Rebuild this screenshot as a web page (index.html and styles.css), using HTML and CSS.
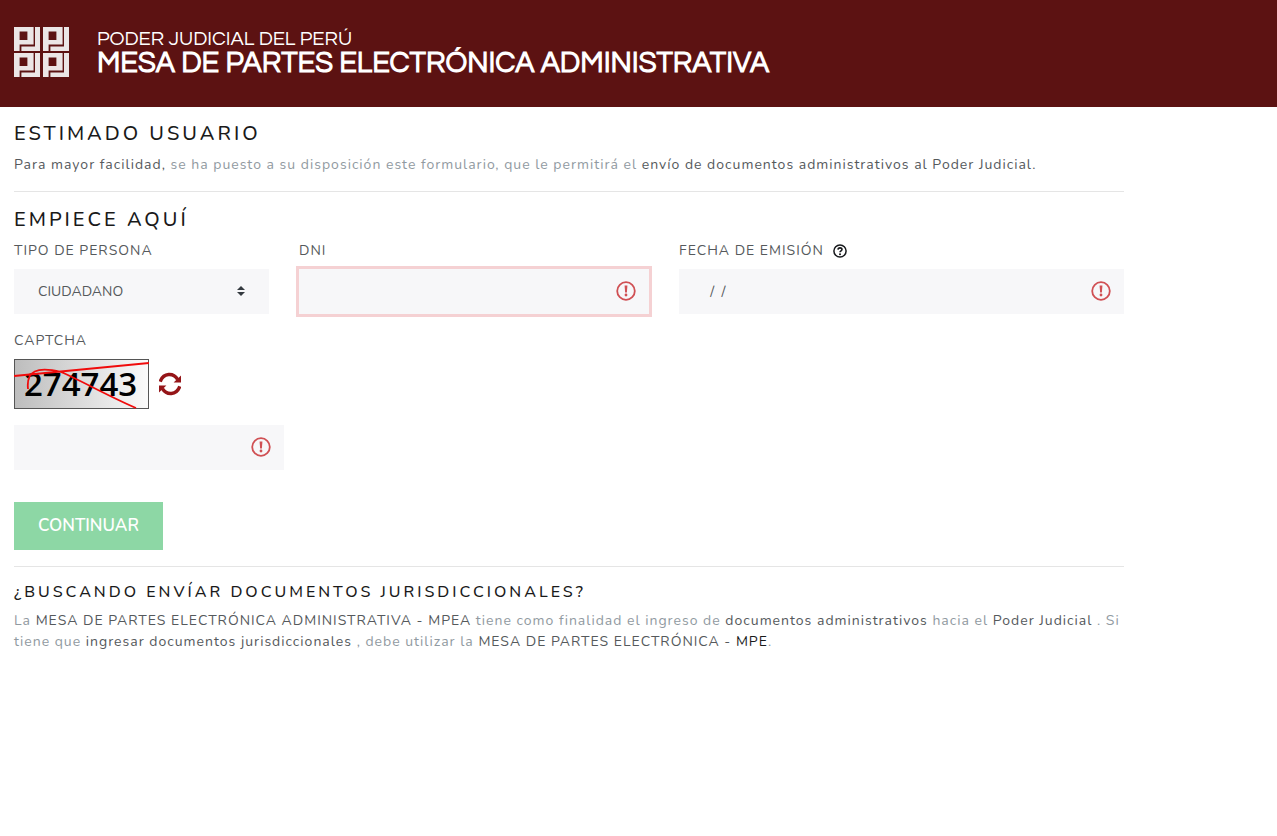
FILE: index.html
```html
<!DOCTYPE html>
<html lang="es">
<head>
  <meta charset="utf-8">
  <meta name="viewport" content="width=device-width, initial-scale=1">
  <title>Mesa de Partes Electrónica Administrativa</title>
  <link rel="stylesheet" href="styles.css">
</head>
<body>
<!-- Iconos -->
<svg class="sprite" aria-hidden="true">
  <symbol id="icon-alert" viewBox="0 0 20 20">
    <circle cx="10" cy="10" r="8.8" fill="none" stroke="#d05054" stroke-width="1.8"/>
    <path d="M8.6 4.5h2.8l-.5 7H9.1z" fill="#d05054"/>
    <circle cx="10" cy="14" r="1.4" fill="#d05054"/>
  </symbol>
  <symbol id="logo-pj" viewBox="0 0 26 24">
    <path fill-rule="evenodd" d="M0 0H19.6V17.6H5.6V24H0ZM5.6 4.4V13H13.4V4.4Z"/>
    <path d="M21 0H26V24H7.4V19.4H21Z"/>
  </symbol>
</svg>

<!-- Cabecera -->
<header class="header">
  <svg class="logo" viewBox="0 0 55 50" aria-hidden="true">
    <use href="#logo-pj" x="0" y="0" width="26" height="24"/>
    <use href="#logo-pj" x="29" y="0" width="26" height="24"/>
    <use href="#logo-pj" x="0" y="26" width="26" height="24"/>
    <use href="#logo-pj" x="29" y="26" width="26" height="24"/>
  </svg>
  <div class="brand">
    <span class="brand-top">PODER JUDICIAL DEL PERÚ</span>
    <span class="brand-name">MESA DE PARTES ELECTRÓNICA ADMINISTRATIVA</span>
  </div>
</header>

<main class="container">
  <section class="intro">
    <h1>ESTIMADO USUARIO</h1>
    <p><b>Para mayor facilidad,</b> se ha puesto a su disposición este formulario, que le permitirá el <b>envío de documentos administrativos al Poder Judicial.</b></p>
  </section>
  <hr>

  <!-- Formulario -->
  <form>
    <h1>EMPIECE AQUÍ</h1>
    <div class="row">
      <div class="field col-3">
        <label for="tipo">TIPO DE PERSONA</label>
        <div class="control">
          <select id="tipo" name="tipo">
            <option>CIUDADANO</option>
          </select>
          <svg class="arrows" viewBox="0 0 8 10" aria-hidden="true"><path d="M4 0l4 4H0zM4 10L0 6h8z"/></svg>
        </div>
      </div>
      <div class="field col-4">
        <label for="dni">DNI</label>
        <div class="control">
          <input class="focused" type="text" id="dni" name="dni">
          <svg class="alert"><use href="#icon-alert"/></svg>
        </div>
      </div>
      <div class="field col-5">
        <label for="fecha">FECHA DE EMISIÓN
          <svg class="help" viewBox="0 0 14 14" aria-hidden="true">
            <circle cx="7" cy="7" r="6.1" fill="none" stroke="#16181b" stroke-width="1.5"/>
            <path d="M5 5.6C5.1 3.3 9 3.3 9 5.5 9 6.9 7 6.8 7 8.3" fill="none" stroke="#16181b" stroke-width="1.6"/>
            <circle cx="7" cy="10.3" r="1" fill="#16181b"/>
          </svg>
        </label>
        <div class="control">
          <input type="text" id="fecha" name="fecha" value="  /  /">
          <svg class="alert"><use href="#icon-alert"/></svg>
        </div>
      </div>
    </div>

    <div class="field captcha">
      <label for="captcha">CAPTCHA</label>
      <div class="captcha-line">
        <svg class="captcha-image" viewBox="0 0 135 50">
          <defs>
            <linearGradient id="captcha-bg" x1="0" y1="0" x2="1" y2="0">
              <stop offset="0" stop-color="#bdbdbd"/>
              <stop offset="1" stop-color="#fafafa"/>
            </linearGradient>
          </defs>
          <rect x=".5" y=".5" width="134" height="49" fill="url(#captcha-bg)" stroke="#555"/>
          <text x="10" y="37">274743</text>
          <path d="M0 17L135 4M14 30C12 12 23 7 47 13C66 21 92 36 122 49" fill="none" stroke="#f00b0b" stroke-width="1.8"/>
        </svg>
        <button type="button" class="refresh" aria-label="Actualizar">
          <svg viewBox="0 0 22 24" aria-hidden="true">
            <path d="M1.2 9.6C4.5 .4 14.5 .6 18.6 7.4M20.8 14.4C17.5 23.6 7.5 23.4 3.4 16.6" fill="none" stroke="#951518" stroke-width="3.4"/>
            <path d="M22 3.4v7.2h-7.4zM0 20.6v-7.2h7.4z" fill="#951518"/>
          </svg>
        </button>
      </div>
      <div class="control">
        <input type="text" id="captcha" name="captcha">
        <svg class="alert"><use href="#icon-alert"/></svg>
      </div>
    </div>

    <button type="submit" class="btn">CONTINUAR</button>
  </form>
  <hr>

  <section class="info">
    <h2>¿BUSCANDO ENVÍAR DOCUMENTOS JURISDICCIONALES?</h2>
    <p>La <b>MESA DE PARTES ELECTRÓNICA ADMINISTRATIVA - MPEA</b> tiene como finalidad el ingreso de <b>documentos administrativos</b> hacia el <b>Poder Judicial</b> . Si tiene que <b>ingresar documentos jurisdiccionales</b> , debe utilizar la <b>MESA DE PARTES ELECTRÓNICA - <a href="#">MPE</a></b>.</p>
  </section>
</main>
</body>
</html>
```
FILE: styles.css
```css
/* base */
* { box-sizing: border-box; }
body { margin: 0; background: #fff; color: #919aa1; font-family: Nunito, Lato, sans-serif; font-size: 14px; line-height: 21px; letter-spacing: 1px; }
h1, h2 { color: #1a1a1a; font-weight: 500; letter-spacing: 3px; margin: 0; }
h1 { font-size: 20px; line-height: 24px; }
h2 { font-size: 16px; line-height: 18px; }
p { margin: 0; }
b { color: #55595c; font-weight: 400; }
a { color: #1a1a1a; text-decoration: none; }
hr { border: 0; border-top: 1px solid #e5e5e5; margin: 16px 0; }
.sprite { display: none; }

/* cabecera */
.header { display: flex; align-items: center; gap: 28px; background: #5c1212; color: #fff; padding: 27px 14px 30px; }
.logo { width: 55px; height: 50px; fill: #ebe6e6; }
.brand { display: flex; flex-direction: column; font-family: Questrial, Inter, sans-serif; letter-spacing: normal; }
.brand-top { font-size: 20px; line-height: 22px; font-weight: 400; }
.brand-name { font-size: 29px; line-height: 26px; font-weight: 700; }

/* contenido */
.container { max-width: 1138px; padding: 15px 14px; }
.intro p { margin-top: 8px; }
.row { display: grid; grid-template-columns: repeat(12, 1fr); column-gap: 30px; margin-top: 8px; }
.col-3 { grid-column: span 3; }
.col-4 { grid-column: span 4; }
.col-5 { grid-column: span 5; }

/* campos */
.field label { display: flex; align-items: center; gap: 9px; height: 21px; margin-bottom: 8px; color: #55595c; }
.control { position: relative; }
.control input, .control select { display: block; width: 100%; height: 45px; padding: 0 24px; border: 0; border-radius: 0; background: #f7f7f9; color: #55595c; font: inherit; letter-spacing: normal; appearance: none; outline: none; }
.control input.focused { box-shadow: 0 0 0 3px #f5d1d3; }
.alert { position: absolute; right: 13px; top: 12px; width: 20px; height: 20px; }
.arrows { position: absolute; right: 24px; top: 17px; width: 8px; height: 10px; fill: #343a40; }
.help { width: 14px; height: 14px; }

/* captcha */
.captcha { width: 270px; margin-top: 16px; }
.captcha-line { display: flex; align-items: center; gap: 10px; margin-bottom: 16px; }
.captcha-image { width: 135px; height: 50px; }
.captcha-image text { font-family: "Open Sans", sans-serif; font-size: 33px; font-weight: 600; letter-spacing: normal; fill: #000; }
.refresh { width: 22px; height: 24px; padding: 0; border: 0; background: none; cursor: pointer; }
.refresh svg { display: block; width: 22px; height: 24px; }

.btn { display: block; height: 48px; margin-top: 32px; padding: 0 24px 2px; border: 0; background: #8dd7a5; color: #fff; font: inherit; font-size: 17px; font-weight: 600; letter-spacing: normal; cursor: pointer; }
.info p { margin-top: 9px; }
```
